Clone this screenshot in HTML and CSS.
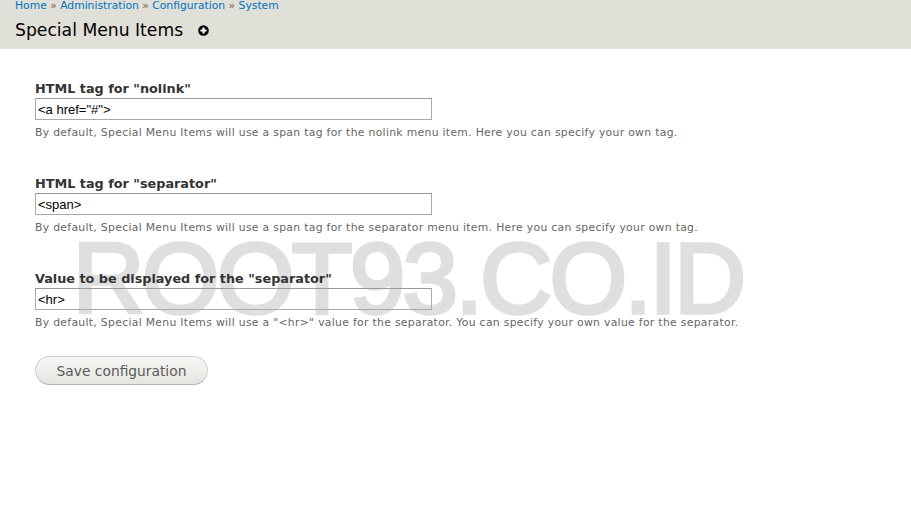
FILE: index.html
```html
<!DOCTYPE html>
<html lang="en">
<head>
<meta charset="utf-8">
<title>Special Menu Items</title>
<link rel="stylesheet" href="styles.css">
</head>
<body>
<header class="head">
  <nav class="crumbs"><a href="#">Home</a> » <a href="#">Administration</a> » <a href="#">Configuration</a> » <a href="#">System</a></nav>
  <h1 class="title">Special Menu Items
    <svg class="add" viewBox="0 0 11 11" width="11" height="11" aria-hidden="true"><circle cx="5.5" cy="5.5" r="5.3" fill="#000"/><path d="M5.5 2.4v6.2M2.4 5.5h6.2" stroke="#fff" stroke-width="2.2"/></svg>
  </h1>
</header>
<main class="content">
  <div class="watermark" aria-hidden="true">ROOT93.CO.ID</div>
  <form class="form">
    <div class="field">
      <label class="label">HTML tag for "nolink"</label>
      <input class="input" type="text" value="&lt;a href=&quot;#&quot;&gt;">
      <p class="desc">By default, Special Menu Items will use a span tag for the nolink menu item. Here you can specify your own tag.</p>
    </div>
    <div class="field">
      <label class="label">HTML tag for "separator"</label>
      <input class="input" type="text" value="&lt;span&gt;">
      <p class="desc">By default, Special Menu Items will use a span tag for the separator menu item. Here you can specify your own tag.</p>
    </div>
    <div class="field">
      <label class="label">Value to be displayed for the "separator"</label>
      <input class="input" type="text" value="&lt;hr&gt;">
      <p class="desc">By default, Special Menu Items will use a "&lt;hr&gt;" value for the separator. You can specify your own value for the separator.</p>
    </div>
    <button class="save" type="button">Save configuration</button>
  </form>
</main>
</body>
</html>
```

FILE: styles.css
```css
html, body { margin: 0; padding: 0; background: #fff; }
body {
  font-family: "DejaVu Sans", sans-serif;
  font-size: 11px;
  color: #333;
  height: 517px;
  overflow: hidden;
}
.head {
  background: #e0dfd8;
  height: 49px;
  padding: 0 15px;
  box-sizing: border-box;
}
.crumbs {
  font-size: 10.75px;
  line-height: 11px;
  color: #7a5a30;
}
.crumbs a { color: #0074bd; text-decoration: none; }
.title {
  margin: 0;
  padding-top: 7px;
  font-size: 17.2px;
  line-height: 24px;
  font-weight: 400;
  color: #000;
}
.add { margin-left: 9px; vertical-align: 0; }
.content { position: relative; padding: 31px 35px 0; }
.watermark {
  position: absolute;
  left: 72.5px;
  top: 179px;
  font-family: "Liberation Sans", sans-serif;
  font-size: 100px;
  line-height: 100px;
  letter-spacing: -2.9px;
  -webkit-text-stroke: 3.5px #dfdfdf;
  color: #dfdfdf;
  white-space: nowrap;
}
.form { position: relative; }
.field { margin-bottom: 40px; height: 55px; }
.label {
  display: block;
  font-weight: 700;
  font-size: 12.8px;
  line-height: 16px;
  color: #333;
  margin-bottom: 2px;
  position: relative;
  top: 0.5px;
}
.input {
  display: block;
  box-sizing: border-box;
  width: 397px;
  height: 22px;
  border: 1px solid #aaa;
  border-top-color: #999;
  background: transparent;
  padding: 0 2px;
  font-family: "Liberation Sans", sans-serif;
  font-size: 13px;
  color: #000;
}
.desc {
  margin: 0;
  padding-top: 6px;
  font-size: 10.8px;
  letter-spacing: 0.315px;
  line-height: 13px;
  color: #666;
  white-space: nowrap;
}
.save {
  display: block;
  margin-top: -9px;
  width: 173px;
  height: 29px;
  border: 1px solid #d0d0cc;
  border-bottom-color: #b4b4b0;
  border-radius: 15px;
  background: linear-gradient(#f7f7f5, #e4e4e0);
  font-family: "DejaVu Sans", sans-serif;
  font-size: 13.8px;
  color: #5a5a5a;
  padding: 0;
}
```
